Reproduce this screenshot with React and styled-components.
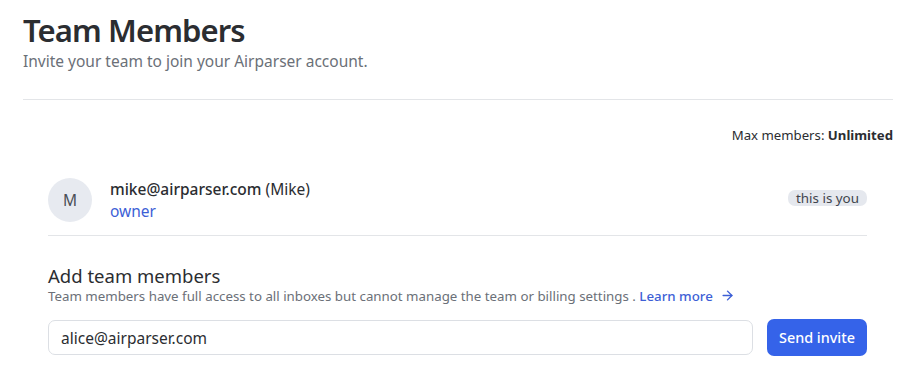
import React from "react";
import styled, { createGlobalStyle } from "styled-components";
import { ArrowRight } from "lucide-react";

const Global = createGlobalStyle`
  body {
    margin: 0;
    background: #fff;
    font-family: "Noto Sans", "Open Sans", sans-serif;
    color: #1f2328;
  }
`;

const Page = styled.div`
  padding: 10px 27px 0 23px;
`;

const Title = styled.h1`
  margin: 0;
  font-size: 31px;
  font-weight: 600;
  letter-spacing: -0.9px;
  line-height: 40px;
  color: #2b2d31;
`;

const Subtitle = styled.p`
  margin: 0;
  font-size: 15.5px;
  line-height: 22px;
  color: #6b7078;
`;

const Divider = styled.hr`
  margin: 27px 0 0;
  border: none;
  border-top: 1px solid #e3e5e8;
`;

const Limit = styled.div`
  margin-top: 26px;
  text-align: right;
  font-size: 13.2px;
  line-height: 18px;
  color: #2b2d31;
  b {
    font-weight: 700;
  }
`;

const Section = styled.div`
  padding: 0 26px 0 25px;
`;

const MemberRow = styled.div`
  display: flex;
  align-items: center;
  gap: 18px;
  padding: 34px 0 13px;
  border-bottom: 1px solid #e3e5e8;
`;

const Avatar = styled.div`
  width: 44px;
  height: 44px;
  border-radius: 50%;
  background: #e7eaf0;
  color: #4a4f57;
  display: flex;
  align-items: center;
  justify-content: center;
  font-size: 15.5px;
`;

const MemberInfo = styled.div`
  flex: 1;
  display: flex;
  flex-direction: column;
`;

const Email = styled.span`
  font-size: 15.5px;
  line-height: 22px;
  color: #2b2d31;
  b {
    font-weight: 500;
  }
`;

const Role = styled.span`
  font-size: 15.5px;
  line-height: 22px;
  color: #3d5fd6;
`;

const Badge = styled.span`
  background: #e5e8ee;
  color: #3f444c;
  font-size: 13.4px;
  line-height: 16px;
  padding: 0 8px;
  border-radius: 7px;
  margin-top: -4px;
`;

const AddTitle = styled.h2`
  margin: 28px 0 0;
  font-size: 18.5px;
  font-weight: 400;
  line-height: 24px;
  color: #2b2d31;
`;

const Help = styled.p`
  margin: -2px 0 0;
  height: 20px;
  font-size: 13.3px;
  line-height: 20px;
  color: #6b7078;
`;

const LearnMore = styled.a`
  color: #3d5fd6;
  text-decoration: none;
  font-weight: 500;
  svg {
    margin-left: 7px;
    vertical-align: -2px;
  }
`;

const InviteRow = styled.div`
  display: flex;
  align-items: center;
  gap: 14px;
  margin-top: 13px;
`;

const Input = styled.input`
  flex: 1;
  height: 35px;
  box-sizing: border-box;
  border: 1px solid #dcdfe4;
  border-radius: 7px;
  padding: 0 12px;
  font-family: inherit;
  font-size: 15.5px;
  color: #2b2d31;
  outline: none;
`;

const Button = styled.button`
  height: 37px;
  padding: 0 12px;
  border: none;
  border-radius: 7px;
  background: #3563e9;
  color: #fff;
  font-family: inherit;
  font-size: 14.4px;
  font-weight: 500;
`;

export default function App() {
  return (
    <Page>
      <Global />
      <Title>Team Members</Title>
      <Subtitle>Invite your team to join your Airparser account.</Subtitle>
      <Divider />
      <Limit>
        Max members: <b>Unlimited</b>
      </Limit>
      <Section>
        <MemberRow>
          <Avatar>M</Avatar>
          <MemberInfo>
            <Email>
              <b>mike@airparser.com</b> (Mike)
            </Email>
            <Role>owner</Role>
          </MemberInfo>
          <Badge>this is you</Badge>
        </MemberRow>
        <AddTitle>Add team members</AddTitle>
        <Help>
          Team members have full access to all inboxes but cannot manage the team or billing settings .{" "}
          <LearnMore href="#">
            Learn more
            <ArrowRight size={15} strokeWidth={2.25} />
          </LearnMore>
        </Help>
        <InviteRow>
          <Input defaultValue="alice@airparser.com" />
          <Button>Send invite</Button>
        </InviteRow>
      </Section>
    </Page>
  );
}
